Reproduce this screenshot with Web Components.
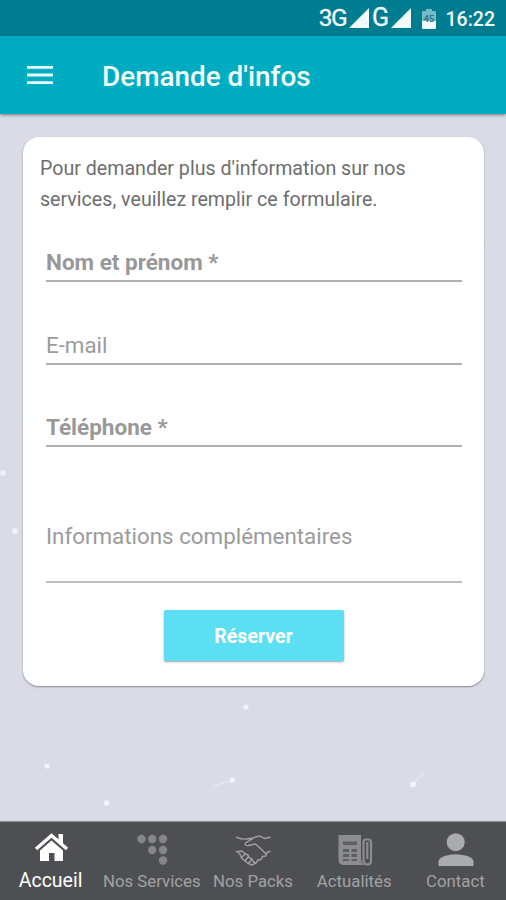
<!DOCTYPE html>
<html lang="fr">
<head>
<meta charset="utf-8">
<title>Demande d'infos</title>
<style>
html,body{margin:0;height:100%;overflow:hidden}
body{font-family:Roboto,"Liberation Sans",sans-serif;background:#d9dce6}
</style>
</head>
<body>
<info-app></info-app>
<script>
function define(name, html) {
  const tpl = document.createElement('template');
  tpl.innerHTML = html;
  customElements.define(name, class extends HTMLElement {
    constructor() {
      super();
      this.attachShadow({mode: 'open'}).appendChild(tpl.content.cloneNode(true));
    }
  });
}

define('status-bar', `
<style>
:host{display:flex;align-items:center;justify-content:flex-end;height:36px;box-sizing:border-box;padding-right:11px;background:#007c91;color:#f2fbfc;flex:none}
.net{font-size:24.5px;line-height:38px;letter-spacing:-1.6px;-webkit-text-stroke:.3px #f2fbfc}
.sig{width:20px;height:20px;margin:0 3px 0 3px}
.g{font-size:25px;margin-left:0}
.bat{width:14px;height:20px;margin:1px 10px 0 8px}
.time{font-size:19.5px;font-weight:500;line-height:38px;letter-spacing:0;padding-top:3px}
svg{flex:none;display:block}
</style>
<span class="net">3G</span>
<svg class="sig" viewBox="0 0 20 20"><path d="M20 0V20H0Z" fill="#f2fbfc"/></svg>
<span class="net g">G</span>
<svg class="sig" viewBox="0 0 20 20"><path d="M20 0V20H0Z" fill="#f2fbfc"/></svg>
<svg class="bat" viewBox="0 0 14 20"><path d="M4 0h6v2h3q1 0 1 1v9H0V3q0-1 1-1h3Z" fill="#78bac6"/><path d="M0 12h14v7q0 1-1 1H1q-1 0-1-1Z" fill="#f2fbfc"/><text x="7" y="13" font-size="9" font-weight="700" text-anchor="middle" fill="#23758a">45</text></svg>
<span class="time">16:22</span>`);

define('app-bar', `
<style>
:host{display:flex;align-items:center;height:78px;flex:none;box-sizing:border-box;padding:0 27px;gap:49px;background:#00acc1;color:#f4feff;box-shadow:0 1px 3px rgba(50,60,75,.65);position:relative}
svg{width:26px;height:20px;display:block}
h1{margin:0;padding-top:4px;font-size:27.9px;line-height:36px;font-weight:500;letter-spacing:0}
</style>
<svg viewBox="0 0 26 20"><path d="M0 2.3h26M0 10h26M0 17.7h26" stroke="#e8fbfd" stroke-width="2.8"/></svg>
<h1><slot></slot></h1>`);

define('form-card', `
<style>
:host{display:block;height:548.5px;box-sizing:border-box;padding:17px 22px 0 17px;border-radius:16px;background:#fff;box-shadow:0 1px 2px rgba(70,70,75,.55)}
</style><slot></slot>`);

define('form-intro', `
<style>
:host{display:block;font-size:19.63px;line-height:30.5px;color:#6e6e6e;white-space:nowrap}
</style><slot></slot>`);

define('form-field', `
<style>
:host{display:flex;flex-direction:column;justify-content:flex-end;height:82.5px;box-sizing:border-box;margin-left:6px;border-bottom:2px solid #b0b0b0;padding-bottom:5px;font-size:22.35px;line-height:26px;color:#9b9b9b;white-space:nowrap}
:host([required]){font-weight:700;color:#989898;font-size:22.5px}
:host([large]){height:136px;padding-bottom:32px;border-bottom-color:#bfbfbf}
</style><span><slot></slot></span>`);

define('action-button', `
<style>
:host{display:flex;justify-content:center;margin:27px 0 0 5px}
button{width:180px;height:51px;padding:2px 0 0;border:0;border-radius:2px;background:#5cdff3;color:#fff;font:700 19.5px/49px Roboto,"Liberation Sans",sans-serif;box-shadow:0 1px 2px rgba(60,70,75,.5)}
</style><button><slot></slot></button>`);

define('star-field', `
<style>:host{display:block;position:absolute;inset:0}svg{display:block}</style>
<svg width="506" height="708" viewBox="0 114 506 708">
<g stroke="#e2e5ed" stroke-width="1.2" opacity=".3" fill="none"><path d="M25 690L115 733L232 780L150 813M47 766L107 803M280 720L380 768M360 718L413 784L425 771L490 690M484 245L506 262M0 473L15 531"/></g>
<path d="M212 787L232 780M413 784L424 772" stroke="#e6e9f0" stroke-width="1.5" opacity=".7"/>
<g fill="#f0f3fa"><circle cx="246" cy="707" r="2.6"/><circle cx="47" cy="766" r="2.6"/><circle cx="232.500" cy="780" r="2.7"/><circle cx="106.500" cy="803" r="2.7"/><circle cx="413" cy="784.500" r="3"/><circle cx="3" cy="473" r="2.7"/><circle cx="15" cy="531" r="3"/></g>
</svg>`);

define('nav-item', `
<style>
:host{display:flex;flex-direction:column;align-items:center;color:#a1a2a4;font-size:16.8px;line-height:22px;white-space:nowrap;padding-top:8px;box-sizing:border-box;min-width:0}
:host([active]){color:#fff;font-size:19.5px}
span{margin-top:2px}
</style><slot name="icon"></slot><span><slot></slot></span>`);

define('bottom-nav', `
<style>
:host{display:grid;grid-template-columns:repeat(5,1fr);height:78px;flex:none;background:#4e4f52;box-shadow:0 -1px 1px #8e9497}
svg{display:block;width:38px;height:38px;flex:none}
</style>
<nav-item active><svg slot="icon" viewBox="0 0 38 38"><path d="M4 19L19.500 5.500L35 19" fill="none" stroke="#fff" stroke-width="3.400"/><path d="M26.500 4H31v11l-4.500-4Z" fill="#fff"/><path d="M8 20.500L19.500 10.500L31 20.500V31H22.500V23H17V31H8Z" fill="#fff"/></svg>Accueil</nav-item>
<nav-item><svg slot="icon" viewBox="0 0 38 38"><g fill="#858688"><circle cx="8.500" cy="9" r="4.200"/><circle cx="19.200" cy="9" r="4.200"/><circle cx="30" cy="9" r="4.200"/><circle cx="19.200" cy="20" r="4.200"/><circle cx="30" cy="20" r="4.200"/><circle cx="30" cy="30.500" r="4.200"/></g></svg>Nos Services</nav-item>
<nav-item><svg slot="icon" viewBox="0 0 38 38"><g fill="none" stroke="#a0a1a2" stroke-width="1.400" stroke-linejoin="round" stroke-linecap="round"><path d="M2.500 7.300Q8 9.500 12.700 9L19 8Q25 5.500 27 6.500L30 8.500L36 7.300M19 8.300L11.500 13Q10.500 16 14 15.500L21.500 14L27 19L32.500 24.500M36 21.300L33 22.500L31.700 26L28.500 26.500L27 29.500L24 30L22 33L17.700 35.200L12.500 32.300L7.500 28L6 24L2.500 21.300"/><path d="M4 21.500L8 21L11.500 24L14 25L15.500 28L18 29L19.500 32L21.500 33M7.500 27.500L11 24M11 31L14.500 26.500M14.500 33L17.500 30"/></g></svg>Nos Packs</nav-item>
<nav-item><svg slot="icon" viewBox="0 0 38 38"><path d="M3.500 5h22.500v24q0 3 3 6H9q-5.500 0-5.500-5Z" fill="#8c8d8f"/><path d="M8 11.500h14v3.500H8ZM8 19h6v3H8ZM16.500 19h5.500v3h-5.500ZM8 24h6v3H8ZM16.500 24h5.500v3h-5.500ZM8 29h6v2H8ZM16.500 29h5.500v2h-5.500Z" fill="#5e5f62"/><path d="M28.500 31V12q0-2.500 2.500-2.500h2.500q2.500 0 2.500 2.500v19q0 3.500-3.500 3.500t-4-3.500ZM32.300 12v17" fill="none" stroke="#8c8d8f" stroke-width="2.200"/></svg>Actualités</nav-item>
<nav-item><svg slot="icon" viewBox="0 0 38 38"><circle cx="19.700" cy="12.200" r="9" fill="#aaabad"/><path d="M2.500 36V32q0-4 6-6 11-3.500 23 0 6 2 6 6v4Z" fill="#aaabad"/></svg>Contact</nav-item>`);

define('info-app', `
<style>
:host{display:flex;flex-direction:column;width:506px;height:900px;background:#d9dce6}
main{flex:1;min-height:0;position:relative;box-sizing:border-box;padding:23px 22px 0 23px}
form-card{position:relative}
.first{height:67px}
</style>
<status-bar></status-bar>
<app-bar>Demande d'infos</app-bar>
<main>
<star-field></star-field>
<form-card>
<form-intro>Pour demander plus d'information sur nos<br>services, veuillez remplir ce formulaire.</form-intro>
<form-field class="first" required>Nom et prénom *</form-field>
<form-field>E-mail</form-field>
<form-field required>Téléphone *</form-field>
<form-field large>Informations complémentaires</form-field>
<action-button>Réserver</action-button>
</form-card>
</main>
<bottom-nav></bottom-nav>`);
</script>
</body>
</html>
